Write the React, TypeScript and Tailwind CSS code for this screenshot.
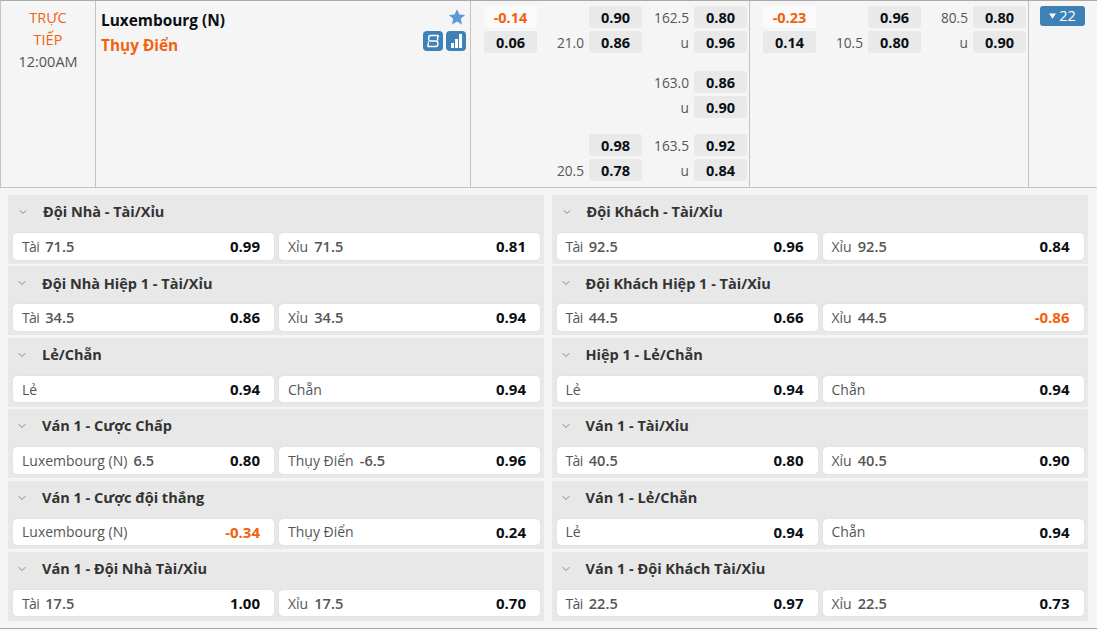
import { ChevronDown } from 'lucide-react';

const FONT = 'font-["Open_Sans","Noto_Sans",sans-serif]';

type Cell = { label: string; line?: string; odds: string; hot?: boolean };
type Market = { title: string; first?: boolean; cells: [Cell, Cell] };

const left: Market[] = [
  {
    title: 'Đội Nhà - Tài/Xỉu',
    first: true,
    cells: [
      { label: 'Tài', line: '71.5', odds: '0.99' },
      { label: 'Xỉu', line: '71.5', odds: '0.81' },
    ],
  },
  {
    title: 'Đội Nhà Hiệp 1 - Tài/Xỉu',
    cells: [
      { label: 'Tài', line: '34.5', odds: '0.86' },
      { label: 'Xỉu', line: '34.5', odds: '0.94' },
    ],
  },
  {
    title: 'Lẻ/Chẵn',
    cells: [
      { label: 'Lẻ', odds: '0.94' },
      { label: 'Chẵn', odds: '0.94' },
    ],
  },
  {
    title: 'Ván 1 - Cược Chấp',
    cells: [
      { label: 'Luxembourg (N)', line: '6.5', odds: '0.80' },
      { label: 'Thụy Điển', line: '-6.5', odds: '0.96' },
    ],
  },
  {
    title: 'Ván 1 - Cược đội thắng',
    cells: [
      { label: 'Luxembourg (N)', odds: '-0.34', hot: true },
      { label: 'Thụy Điển', odds: '0.24' },
    ],
  },
  {
    title: 'Ván 1 - Đội Nhà Tài/Xỉu',
    cells: [
      { label: 'Tài', line: '17.5', odds: '1.00' },
      { label: 'Xỉu', line: '17.5', odds: '0.70' },
    ],
  },
];

const right: Market[] = [
  {
    title: 'Đội Khách - Tài/Xỉu',
    first: true,
    cells: [
      { label: 'Tài', line: '92.5', odds: '0.96' },
      { label: 'Xỉu', line: '92.5', odds: '0.84' },
    ],
  },
  {
    title: 'Đội Khách Hiệp 1 - Tài/Xỉu',
    cells: [
      { label: 'Tài', line: '44.5', odds: '0.66' },
      { label: 'Xỉu', line: '44.5', odds: '-0.86', hot: true },
    ],
  },
  {
    title: 'Hiệp 1 - Lẻ/Chẵn',
    cells: [
      { label: 'Lẻ', odds: '0.94' },
      { label: 'Chẵn', odds: '0.94' },
    ],
  },
  {
    title: 'Ván 1 - Tài/Xỉu',
    cells: [
      { label: 'Tài', line: '40.5', odds: '0.80' },
      { label: 'Xỉu', line: '40.5', odds: '0.90' },
    ],
  },
  {
    title: 'Ván 1 - Lẻ/Chẵn',
    cells: [
      { label: 'Lẻ', odds: '0.94' },
      { label: 'Chẵn', odds: '0.94' },
    ],
  },
  {
    title: 'Ván 1 - Đội Khách Tài/Xỉu',
    cells: [
      { label: 'Tài', line: '22.5', odds: '0.97' },
      { label: 'Xỉu', line: '22.5', odds: '0.73' },
    ],
  },
];

function OddsBox({ value, hot, light }: { value: string; hot?: boolean; light?: boolean }) {
  return (
    <div
      className={`flex h-[22px] w-[53px] shrink-0 items-center justify-center rounded-[3px] pt-px text-[14.5px] font-bold ${
        light ? 'bg-[#fafafa]' : 'bg-[#e9e9e9]'
      } ${hot ? 'text-[#f3610f]' : 'text-[#0b0f14]'}`}
    >
      {value}
    </div>
  );
}

function Label({ text }: { text?: string }) {
  return (
    <div className="w-[52px] shrink-0 pt-px pr-[5px] text-right text-[13.7px] leading-[22px] text-[#555]">
      {text}
    </div>
  );
}

type Row = { a?: string; aHot?: boolean; aLight?: boolean; line?: string; b?: string; total?: string; c: string };

function OddsRow({ row }: { row: Row }) {
  return (
    <div className="flex h-[22px] items-center">
      <div className="w-[53px] shrink-0">
        {row.a && <OddsBox value={row.a} hot={row.aHot} light={row.aLight} />}
      </div>
      <Label text={row.line} />
      {row.b ? <OddsBox value={row.b} /> : <div className="w-[53px] shrink-0" />}
      <Label text={row.total} />
      <OddsBox value={row.c} />
    </div>
  );
}

function OddsColumn({ blocks }: { blocks: Row[][] }) {
  return (
    <div className="w-[279px] shrink-0 border-r border-[#c4c4c4] pt-[5px] pl-[13px]">
      {blocks.map((block, i) => (
        <div
          key={i}
          className={`flex flex-col gap-[3px] ${i === 1 ? 'mt-[18px]' : ''} ${i === 2 ? 'mt-[16px]' : ''}`}
        >
          {block.map((row, j) => (
            <OddsRow key={j} row={row} />
          ))}
        </div>
      ))}
    </div>
  );
}

function StarIcon() {
  return (
    <svg viewBox="0 0 24 24" className="h-[18px] w-[18px]" fill="#5b9bd5" aria-hidden="true">
      <path d="M12 1.500l3.200 7 7.600.8-5.700 5.100 1.600 7.600L12 18.100 5.300 22l1.600-7.600L1.200 9.300l7.600-.8z" />
    </svg>
  );
}

function ScrollIcon() {
  return (
    <div className="flex h-[20px] w-[20px] items-center justify-center rounded-[4px] bg-[#3d81b6]">
      <svg viewBox="0 0 20 20" className="h-[20px] w-[20px]" fill="none" stroke="#fff" strokeWidth="1.4" aria-hidden="true">
        <path d="M15.500 4.500H7.500c-2.500 0-2.500 5.500 0 5.500h5.500c2.500 0 2.500 5.500 0 5.500H4.500" />
        <path d="M15.500 4.500c-1 1.500-1.200 3.500-.6 5M4.500 15.500c1-1.500 1.200-3.500.6-5" />
      </svg>
    </div>
  );
}

function BarsIcon() {
  return (
    <div className="flex h-[20px] w-[20px] items-end justify-center gap-[1px] rounded-[4px] bg-[#3d81b6] pb-[3px]">
      <div className="h-[5px] w-[3px] bg-white" />
      <div className="h-[9px] w-[3px] bg-white" />
      <div className="h-[14px] w-[3px] bg-white" />
    </div>
  );
}

function MatchRow() {
  return (
    <div className="flex h-[188px] border-t border-b border-l border-t-[#aaa] border-b-[#c4c4c4] border-l-[#c4c4c4] bg-[#f5f5f5]">
      <div className="flex w-[95px] shrink-0 flex-col items-center border-r border-[#c4c4c4] pt-[6px] text-[14.5px] leading-[22px]">
        <div className="text-[#f3610f]">TRỰC</div>
        <div className="text-[#f3610f]">TIẾP</div>
        <div className="text-[#555]">12:00AM</div>
      </div>
      <div className="flex w-[375px] shrink-0 justify-between border-r border-[#c4c4c4] pt-[7px] pr-[4px] pl-[5px]">
        <div className="flex flex-col gap-[3px] pt-[2px]">
          <div className="text-[15.4px] leading-[22px] font-bold text-[#0b0f14]">Luxembourg (N)</div>
          <div className="text-[15.4px] leading-[22px] font-bold text-[#f3610f]">Thụy Điển</div>
        </div>
        <div className="flex flex-col items-end gap-[5px]">
          <StarIcon />
          <div className="flex gap-[3px]">
            <ScrollIcon />
            <BarsIcon />
          </div>
        </div>
      </div>
      <OddsColumn
        blocks={[
          [
            { a: '-0.14', aHot: true, aLight: true, b: '0.90', total: '162.5', c: '0.80' },
            { a: '0.06', line: '21.0', b: '0.86', total: 'u', c: '0.96' },
          ],
          [
            { total: '163.0', c: '0.86' },
            { total: 'u', c: '0.90' },
          ],
          [
            { b: '0.98', total: '163.5', c: '0.92' },
            { line: '20.5', b: '0.78', total: 'u', c: '0.84' },
          ],
        ]}
      />
      <OddsColumn
        blocks={[
          [
            { a: '-0.23', aHot: true, aLight: true, b: '0.96', total: '80.5', c: '0.80' },
            { a: '0.14', line: '10.5', b: '0.80', total: 'u', c: '0.90' },
          ],
        ]}
      />
      <div className="flex-1 pt-[5px] pl-[11px]">
        <div className="flex h-[20px] w-[45px] items-center justify-center gap-[3px] rounded-[3px] bg-[#3d81b6] text-[14.5px] text-white">
          <svg viewBox="0 0 8 6" className="h-[6px] w-[7px]" fill="#fff" aria-hidden="true">
            <path d="M0 0h8L4 6z" />
          </svg>
          22
        </div>
      </div>
    </div>
  );
}

function BetCell({ cell }: { cell: Cell }) {
  return (
    <div className="flex h-[26.5px] flex-1 items-center justify-between rounded-[4px] bg-white pr-[14px] pl-[9px] text-[14px] shadow-[0_0_1px_rgba(0,0,0,0.2)]">
      <div className="flex items-center gap-[6px] whitespace-nowrap">
        <span className={`text-[#555] ${cell.label === 'Tài' ? 'tracking-[-0.6px]' : ''}`}>{cell.label}</span>
        {cell.line && <span className="pt-px text-[14.6px] font-semibold text-[#555]">{cell.line}</span>}
      </div>
      <span className={`text-[15px] font-bold ${cell.hot ? 'text-[#f3610f]' : 'text-[#0b0f14]'}`}>{cell.odds}</span>
    </div>
  );
}

function MarketCard({ market }: { market: Market }) {
  return (
    <div className="flex h-[68.9px] flex-col bg-[#e8e8e8] pr-[4px] pl-[5px]">
      <div
        className={`mb-[4px] flex h-[34px] items-center gap-[14px] text-[14.5px] font-bold text-[#333] ${
          market.first ? 'pl-[4px]' : 'pl-[3px]'
        }`}
      >
        <ChevronDown size={12} strokeWidth={1.5} className="text-[#666]" />
        <span>{market.title}</span>
      </div>
      <div className="flex gap-[5px]">
        <BetCell cell={market.cells[0]} />
        <BetCell cell={market.cells[1]} />
      </div>
    </div>
  );
}

export default function App() {
  return (
    <div className={`h-[630px] w-[1097px] overflow-hidden bg-[#f5f5f5] ${FONT}`}>
      <MatchRow />
      <div className="grid grid-cols-[536px_536px] gap-x-[7.5px] gap-y-[2.5px] border-b border-[#aaa] px-[8px] pt-[7px] pb-[7px]">
        {left.map((market, i) => [
          <MarketCard key={`l${i}`} market={market} />,
          <MarketCard key={`r${i}`} market={right[i]} />,
        ])}
      </div>
    </div>
  );
}
